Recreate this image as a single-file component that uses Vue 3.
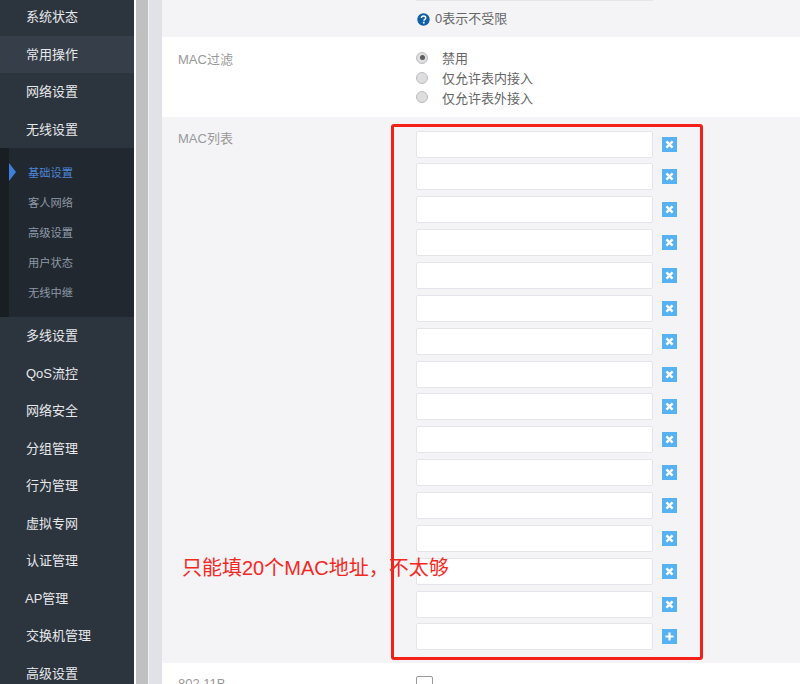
<script setup>
const topItems = [
  { name: '系统状态' },
  { name: '常用操作', active: true },
  { name: '网络设置' },
  { name: '无线设置' }
]
const subItems = ['基础设置', '客人网络', '高级设置', '用户状态', '无线中继']
const bottomItems = ['多线设置', 'QoS流控', '网络安全', '分组管理', '行为管理', '虚拟专网', '认证管理', 'AP管理', '交换机管理', '高级设置']
const radios = ['禁用', '仅允许表内接入', '仅允许表外接入']
const rows = Array.from({ length: 16 }, (_, i) => i)
</script>

<template>
  <div class="page">
    <aside class="sidebar">
      <div v-for="item in topItems" :key="item.name" class="nav" :class="{ active: item.active }">{{ item.name }}</div>
      <div class="sub">
        <div v-for="(s, i) in subItems" :key="s" class="sub-item" :class="{ current: i === 0 }">
          <span v-if="i === 0" class="arrow"></span>{{ s }}
        </div>
      </div>
      <div v-for="item in bottomItems" :key="item" class="nav" :class="{ ap: item === 'AP管理' }">{{ item }}</div>
    </aside>
    <div class="bar"></div>
    <div class="gutter"></div>
    <main class="content">
      <section class="row-top">
        <div class="cut-input"></div>
        <div class="hint">
          <svg class="help" width="13" height="13" viewBox="0 0 13 13">
            <circle cx="6.5" cy="6.5" r="6.2" fill="#105fa6" />
            <path d="M4.4 5.1c0-1.3 1-2 2.2-2s2.1.7 2.1 1.8c0 1.5-1.8 1.5-1.8 2.9" fill="none" stroke="#fff" stroke-width="1.5" />
            <rect x="5.9" y="8.8" width="1.7" height="1.7" fill="#fff" />
          </svg>
          <span>0表示不受限</span>
        </div>
      </section>
      <section class="row-filter">
        <div class="label">MAC过滤</div>
        <div class="radios">
          <label v-for="(r, i) in radios" :key="r" class="radio">
            <span class="dot" :class="{ on: i === 0 }"></span>{{ r }}
          </label>
        </div>
      </section>
      <section class="row-list">
        <div class="label">MAC列表</div>
        <div class="list">
          <div v-for="i in rows" :key="i" class="mac-row">
            <div class="mac-input"></div>
            <span class="btn">
              <svg v-if="i < 15" width="15" height="15" viewBox="0 0 15 15">
                <path d="M4.4 4.4l6.2 6.2M10.6 4.4l-6.2 6.2" stroke="#fff" stroke-width="2.4" />
              </svg>
              <svg v-else width="15" height="15" viewBox="0 0 15 15">
                <path d="M7.5 3.4v8.2M3.4 7.5h8.2" stroke="#fff" stroke-width="2.2" />
              </svg>
            </span>
          </div>
        </div>
        <div class="redbox"></div>
        <div class="note">只能填20个MAC地址，不太够</div>
      </section>
      <section class="row-bottom">
        <div class="label">802.11B</div>
        <div class="check"></div>
      </section>
    </main>
  </div>
</template>

<style>
html, body { margin: 0; background: #fff; }
</style>

<style scoped>
.page {
  width: 800px;
  height: 684px;
  display: flex;
  overflow: hidden;
  font-family: "Liberation Sans", "Noto Sans CJK SC", sans-serif;
  font-size: 13px;
}
.sidebar {
  width: 134px;
  flex: none;
  background: #2c343e;
  margin-top: -1.6px;
  height: 686px;
  overflow: hidden;
}
.nav {
  height: 37.5px;
  line-height: 37.5px;
  padding-left: 26px;
  color: #e6e8ea;
}
.nav.ap { padding-left: 25px; }
.nav.active { background: #353e49; }
.sub {
  background: #21282f;
  border-left: 9px solid #191e23;
  padding: 10px 0 9px;
}
.sub-item {
  position: relative;
  height: 30px;
  line-height: 30px;
  padding-left: 19px;
  font-size: 11.25px;
  color: #8e99a8;
}
.sub-item.current { color: #4d85d6; }
.arrow {
  position: absolute;
  left: 0;
  top: 5px;
  border-left: 7px solid #3d80dc;
  border-top: 9px solid transparent;
  border-bottom: 9px solid transparent;
}
.bar {
  width: 12px;
  flex: none;
  margin-left: 2px;
  background: #c0c0c0;
}
.gutter {
  width: 14px;
  flex: none;
  background: #dfe3e8;
  border-left: 1px solid #f0f1f3;
  box-sizing: border-box;
}
.content {
  flex: 1;
  min-width: 0;
  display: flex;
  flex-direction: column;
  color: #666;
}
.row-top {
  height: 37px;
  flex: none;
  background: #f4f4f7;
  position: relative;
  padding-left: 254px;
}
.cut-input {
  width: 237px;
  height: 1px;
  background: #e4e4ea;
}
.hint {
  display: flex;
  align-items: center;
  gap: 5px;
  margin-top: 11px;
  margin-left: 1px;
  line-height: 14px;
}
.help { flex: none; }
.row-filter {
  height: 80px;
  flex: none;
  background: #fff;
  display: flex;
}
.label {
  width: 254px;
  flex: none;
  box-sizing: border-box;
  padding-left: 16px;
  color: #999;
}
.row-filter .label { padding-top: 15px; line-height: 16px; }
.radios {
  display: flex;
  flex-direction: column;
  padding-top: 11px;
}
.radio {
  display: flex;
  align-items: center;
  height: 19.8px;
  color: #666;
}
.dot {
  position: relative;
  width: 10px;
  height: 10px;
  margin-right: 14px;
  border: 1px solid #bdbdc1;
  border-radius: 50%;
  background: #dededf;
}
.dot.on::after {
  content: "";
  position: absolute;
  left: 2.5px;
  top: 2.5px;
  width: 5px;
  height: 5px;
  border-radius: 50%;
  background: #5c5c5c;
}
.row-list {
  height: 546px;
  flex: none;
  background: #f4f4f7;
  position: relative;
  display: flex;
}
.row-list .label { padding-top: 14px; line-height: 16px; }
.list {
  display: flex;
  flex-direction: column;
  gap: 5.87px;
  padding-top: 13.5px;
}
.mac-row {
  display: flex;
  align-items: center;
  gap: 9px;
}
.mac-input {
  width: 237px;
  height: 27px;
  box-sizing: border-box;
  background: #fff;
  border: 1px solid #e4e4ea;
  border-radius: 2px;
}
.btn {
  display: block;
  width: 15px;
  height: 15px;
  background: #57b1f5;
}
.btn svg { display: block; }
.redbox {
  position: absolute;
  left: 229px;
  top: 7px;
  width: 312px;
  height: 536px;
  box-sizing: border-box;
  border: 3px solid #f5201a;
  border-radius: 3px;
}
.note {
  position: absolute;
  left: 20px;
  top: 437px;
  color: #f5281f;
  font-size: 20px;
  line-height: 28px;
  white-space: nowrap;
}
.row-bottom {
  flex: 1;
  background: #fff;
  display: flex;
}
.row-bottom .label { padding-top: 13px; line-height: 16px; }
.check {
  width: 17px;
  height: 17px;
  margin-top: 13px;
  box-sizing: border-box;
  background: #fff;
  border: 1px solid #999;
  border-radius: 2px;
}
</style>
